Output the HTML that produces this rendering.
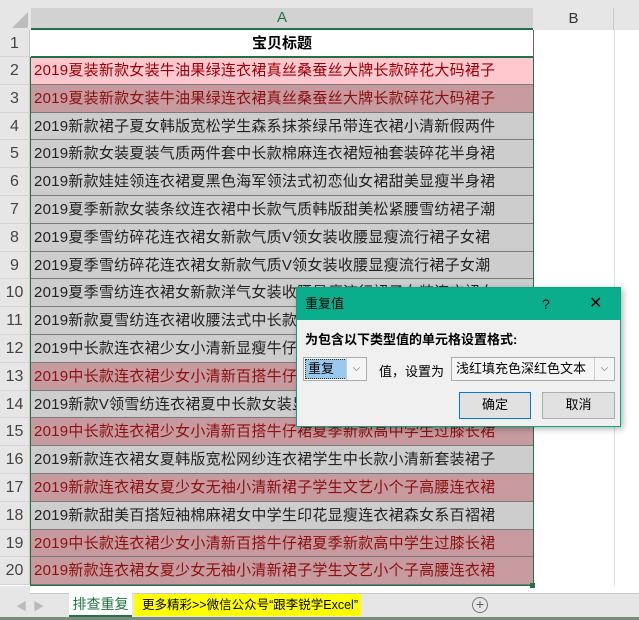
<!DOCTYPE html>
<html><head><meta charset="utf-8"><style>
*{margin:0;padding:0;box-sizing:border-box}
body{width:639px;height:620px;overflow:hidden;background:#fff;font-family:"Liberation Sans","Noto Sans CJK SC",sans-serif;position:relative}
.a{position:absolute}
.hdr{background:#e6e6e6}
.rn{position:absolute;left:0;width:30px;text-align:center;color:#444;font-size:16px;border-bottom:1px solid #d4d4d4;background:#e6e6e6;border-right:1px solid #c8c8c8}
.cell{position:absolute;left:31px;width:502px;font-size:15px;letter-spacing:0.25px;padding-left:3px;white-space:nowrap;overflow:hidden;border-bottom:1px solid #7a7a7a;color:#222;background:#cdcdcd}
.dup{background:#c69a9e;color:#8c1010}
.btn{position:absolute;border:1px solid #adadad;background:#e1e1e1;font-size:13px;text-align:center;line-height:24px;color:#000}
</style></head><body>
<div class="a hdr" style="left:0;top:0;width:639px;height:30px;border-bottom:1px solid #c8c8c8"></div>
<div class="a" style="left:0;top:8px;width:639px;height:22px;background:#e6e6e6"></div>
<div class="a" style="left:31px;top:8px;width:502px;height:22px;background:#d2d2d2;border-bottom:2px solid #217346;text-align:center;color:#217346;font-size:15px;line-height:20px">A</div>
<div class="a" style="left:534px;top:8px;width:80px;height:22px;text-align:center;font-size:15px;line-height:22px;color:#333;border-right:1px solid #c8c8c8">B</div>
<div class="a" style="left:12px;top:12px;width:0;height:0;border-left:16px solid transparent;border-bottom:16px solid #bdbdbd"></div>
<div class="a" style="left:533px;top:30px;width:1px;height:556px;background:#7a5a7a"></div>
<div class="a" style="left:614px;top:30px;width:1px;height:556px;background:#e0e0e0"></div>
<div class="rn" style="top:30px;height:27px;line-height:27px">1</div>
<div class="a" style="left:31px;top:30px;width:502px;height:27px;font-weight:bold;font-size:15px;text-align:center;line-height:27px;border-bottom:1px solid #217346">宝贝标题</div>
<div id="rows"></div>
<div class="a" style="left:30px;top:57px;width:504px;height:529px;border:1.5px solid #217346;pointer-events:none"></div>
<div class="a" style="left:530px;top:583px;width:5px;height:5px;background:#217346"></div>
<script>
const t=[
["2019夏装新款女装牛油果绿连衣裙真丝桑蚕丝大牌长款碎花大码裙子",2],
["2019夏装新款女装牛油果绿连衣裙真丝桑蚕丝大牌长款碎花大码裙子",1],
["2019新款裙子夏女韩版宽松学生森系抹茶绿吊带连衣裙小清新假两件",0],
["2019新款女装夏装气质两件套中长款棉麻连衣裙短袖套装碎花半身裙",0],
["2019新款娃娃领连衣裙夏黑色海军领法式初恋仙女裙甜美显瘦半身裙",0],
["2019夏季新款女装条纹连衣裙中长款气质韩版甜美松紧腰雪纺裙子潮",0],
["2019夏季雪纺碎花连衣裙女新款气质V领女装收腰显瘦流行裙子女裙",0],
["2019夏季雪纺碎花连衣裙女新款气质V领女装收腰显瘦流行裙子女潮",0],
["2019夏季雪纺连衣裙女新款洋气女装收腰显瘦流行裙子女装连衣裙女",0],
["2019新款夏雪纺连衣裙收腰法式中长款显瘦流行裙子女装连衣裙新款",0],
["2019中长款连衣裙少女小清新显瘦牛仔裙夏季新款高中学生过膝长裙",0],
["2019中长款连衣裙少女小清新百搭牛仔裙夏季新款高中学生过膝长裙",1],
["2019新款V领雪纺连衣裙夏中长款女装显瘦收腰气质裙子韩版新款",0],
["2019中长款连衣裙少女小清新百搭牛仔裙夏季新款高中学生过膝长裙",1],
["2019新款连衣裙女夏韩版宽松网纱连衣裙学生中长款小清新套装裙子",0],
["2019新款连衣裙女夏少女无袖小清新裙子学生文艺小个子高腰连衣裙",1],
["2019新款甜美百搭短袖棉麻裙女中学生印花显瘦连衣裙森女系百褶裙",0],
["2019中长款连衣裙少女小清新百搭牛仔裙夏季新款高中学生过膝长裙",1],
["2019新款连衣裙女夏少女无袖小清新裙子学生文艺小个子高腰连衣裙",1]];
let h='';const H=27.8;
t.forEach((r,i)=>{const y=57+i*H;
h+=`<div class="rn" style="top:${y}px;height:${H}px;line-height:${H}px">${i+2}</div>`;
let st=r[1]==2?'background:#ffc7ce;color:#9c0006':'';
h+=`<div class="cell ${r[1]==1?'dup':''}" style="top:${y}px;height:${H}px;line-height:${H}px;${st}">${r[0]}</div>`;});
document.getElementById('rows').innerHTML=h;
</script>
<div class="a" style="left:296px;top:287px;width:325px;height:140px;background:#f0f0f0;border:1px solid #0aa383;box-shadow:2px 2px 6px rgba(0,0,0,.3)">
<div style="height:32px;background:#0aae8c;color:#000;font-size:13px;line-height:32px;padding-left:8px;position:relative">重复值
<span style="position:absolute;left:245px;font-size:14px">?</span>
<span style="position:absolute;left:292px;font-size:16px;font-weight:normal">✕</span></div>
<div class="a" style="left:8px;top:41px;font-size:13px;font-weight:bold">为包含以下类型值的单元格设置格式:</div>
<div class="a" style="left:6px;top:69px;width:64px;height:24px;border:1px solid #adadad;background:#fff">
<div style="position:absolute;left:1px;top:1px;width:42px;height:20px;background:#99c9ef;border:1px dotted #333;font-size:13px;line-height:18px;padding-left:2px">重复</div>
<div style="position:absolute;right:0;top:0;width:20px;height:22px;border-left:1px solid #ccc;background:#f5f5f5;text-align:center;font-size:10px;line-height:22px;color:#555">⌵</div></div>
<div class="a" style="left:82px;top:73px;font-size:13px">值，设置为</div>
<div class="a" style="left:154px;top:69px;width:164px;height:24px;border:1px solid #adadad;background:#f5f5f5;font-size:13px;line-height:22px;padding-left:4px;white-space:nowrap">浅红填充色深红色文本
<div style="position:absolute;right:0;top:0;width:20px;height:22px;border-left:1px solid #ccc;text-align:center;font-size:10px;color:#555">⌵</div></div>
<div class="btn" style="left:162px;top:104px;width:72px;height:27px;border:1px solid #0078d7">确定</div>
<div class="btn" style="left:245px;top:104px;width:73px;height:27px">取消</div>
</div>
<div class="a" style="left:0;top:593px;width:639px;height:27px;background:#e6e6e6;border-top:1px solid #c8c8c8"></div>
<div class="a" style="left:0;top:586px;width:30px;height:8px;background:#e6e6e6"></div>
<div class="a" style="left:16px;top:598px;font-size:11px;color:#bbb">◀ &nbsp;▶</div>
<div class="a" style="left:69px;top:593px;width:63px;height:24px;background:#fff;border-bottom:2px solid #217346;font-size:14px;color:#217346;text-align:center;line-height:22px;white-space:nowrap">排查重复</div>
<div class="a" style="left:134px;top:594px;width:227px;height:22px;background:#ffff00;font-size:12.5px;line-height:22px;padding-left:8px;white-space:nowrap;overflow:hidden">更多精彩&gt;&gt;微信公众号“跟李锐学Excel”</div>
<div class="a" style="left:472px;top:597px;width:16px;height:16px;border:1px solid #777;border-radius:50%;font-size:14px;line-height:13px;text-align:center;color:#555">+</div>
<div class="a" style="left:0;top:617px;width:639px;height:3px;background:#7c8c7c"></div>
</body></html>
